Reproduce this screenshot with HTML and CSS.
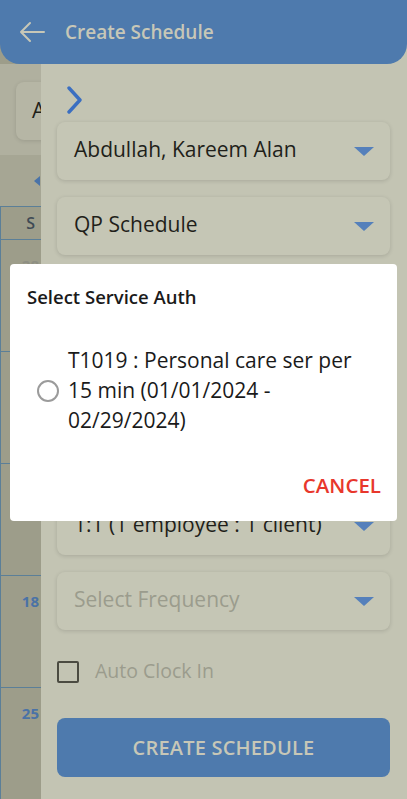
FILE: index.html
```html
<!DOCTYPE html>
<html>
<head>
<meta charset="utf-8">
<link rel="stylesheet" href="styles.css">
</head>
<body>
<div class="screen">
  <header class="appbar">
    <svg class="back" width="26" height="22" viewBox="0 0 26 22"><path d="M25 11H2M11 2L2 11l9 9" fill="none" stroke="#c7c7b7" stroke-width="2" stroke-linecap="round" stroke-linejoin="round"/></svg>
    <span class="title">Create Schedule</span>
  </header>
  <div class="body">
    <div class="behind">
      <div class="calendar">
        <div class="cal-top"><div class="cal-card"><span>A</span></div></div>
        <div class="cal-nav"><span class="nav-arrow"></span></div>
        <div class="cal-grid">
          <div class="cal-head"><span>S</span></div>
          <div class="cal-row"><span class="prev">28</span></div>
          <div class="cal-row"><span>4</span></div>
          <div class="cal-row"><span>11</span></div>
          <div class="cal-row"><span>18</span></div>
          <div class="cal-row"><span>25</span></div>
        </div>
      </div>
    </div>
    <div class="drawer">
      <svg class="chev" width="16" height="28" viewBox="0 0 16 28"><path d="M2 2l11 12L2 26" fill="none" stroke="#3b6fc1" stroke-width="3.4" stroke-linecap="round" stroke-linejoin="round"/></svg>
      <div class="fields">
        <div class="select"><span>Abdullah, Kareem Alan</span><i class="tri"></i></div>
        <div class="select"><span>QP Schedule</span><i class="tri"></i></div>
        <div class="select"><span></span><i class="tri"></i></div>
        <div class="select"><span></span><i class="tri"></i></div>
        <div class="select"><span></span><i class="tri"></i></div>
        <div class="select"><span>1:1 (1 employee : 1 client)</span><i class="tri"></i></div>
        <div class="select placeholder"><span>Select Frequency</span><i class="tri"></i></div>
      </div>
      <label class="check"><span class="box"></span><span>Auto Clock In</span></label>
      <button class="create">CREATE SCHEDULE</button>
    </div>
  </div>
  <div class="dialog">
    <div class="dlg-title">Select Service Auth</div>
    <div class="option">
      <span class="radio"></span>
      <span class="opt-text">T1019 : Personal care ser per 15 min (01/01/2024 - 02/29/2024)</span>
    </div>
    <div class="actions"><span class="cancel">CANCEL</span></div>
  </div>
</div>
</body>
</html>
```
FILE: styles.css
```css
* { box-sizing: border-box; }
html, body { margin: 0; padding: 0; }
body {
  width: 407px;
  height: 799px;
  overflow: hidden;
  font-family: "Open Sans", Lato, sans-serif;
  background: #c3c4b3;
}
.screen {
  position: relative;
  width: 407px;
  height: 799px;
  overflow: hidden;
}
.appbar {
  position: relative;
  z-index: 2;
  height: 64px;
  background: #4e7aad;
  border-radius: 0 0 20px 20px;
  display: flex;
  align-items: center;
  padding-left: 19px;
}
.back { margin-right: 20px; }
.title {
  color: #c7c7b7;
  font-size: 19px;
  font-weight: 600;
}
.body {
  display: flex;
  margin-top: -20px;
  height: 755px;
}
.behind {
  width: 41px;
  flex: none;
  overflow: hidden;
  background: #9d9d8a;
}
.calendar { width: 407px; padding-top: 20px; }
.cal-top {
  height: 91px;
  background: #b0b09f;
  padding: 18px 0 0 16px;
}
.cal-card {
  width: 300px;
  height: 58px;
  border-radius: 8px;
  background: #b6b6a5;
  box-shadow: 0 1px 4px rgba(0,0,0,0.12);
  display: flex;
  align-items: center;
  padding: 0 0 3px 16px;
  font-size: 21px;
  color: #1f1f1a;
}
.cal-nav {
  height: 51px;
  background: #a6a694;
  display: flex;
  align-items: center;
  padding-left: 34px;
}
.nav-arrow {
  width: 0; height: 0;
  border-top: 5px solid transparent;
  border-bottom: 5px solid transparent;
  border-right: 6px solid #4a73a8;
}
.cal-grid {
  border-top: 1px solid #5b7f98;
  border-left: 1px solid #5b7f98;
}
.cal-head {
  height: 32px;
  display: flex;
  align-items: center;
  justify-content: flex-end;
  width: 41px;
  padding-right: 7px;
  font-size: 16px;
  color: #3f4a55;
  font-weight: 600;
}
.cal-row {
  height: 112px;
  border-top: 1px solid #5b7f98;
  width: 407px;
  padding: 15px 0 0 0;
}
.cal-row span {
  display: block;
  width: 38px;
  text-align: right;
  font-size: 15px;
  font-weight: 700;
  color: #4a72a6;
}
.cal-row span.prev { color: #8e8f83; }
.drawer {
  flex: 1;
  background: #c3c4b3;
  padding: 42px 17px 0 16px;
  display: flex;
  flex-direction: column;
}
.chev { margin-left: 10px; display: block; }
.fields {
  margin-top: 8px;
  display: flex;
  flex-direction: column;
  gap: 17px;
}
.select {
  height: 58px;
  border-radius: 8px;
  background: #c5c6b5;
  box-shadow: 0 1px 4px rgba(0,0,0,0.14);
  display: flex;
  align-items: center;
  justify-content: space-between;
  padding: 0 16px 0 17px;
  font-size: 21px;
  color: #1f1f1a;
}
.select span { padding-bottom: 4px; }
.select.placeholder { color: #9b9c8d; }
.tri {
  width: 0; height: 0;
  border-left: 10.5px solid transparent;
  border-right: 10.5px solid transparent;
  border-top: 9px solid #5580bb;
}
.check {
  display: flex;
  align-items: center;
  margin-top: 27px;
  font-size: 19.5px;
  color: #9b9c8d;
}
.check span:last-child { padding-bottom: 3px; }
.box {
  width: 22px;
  height: 22px;
  border: 2px solid #4b4b41;
  border-radius: 2px;
  margin-right: 16px;
}
.create {
  margin-top: 31px;
  height: 59px;
  border: none;
  border-radius: 8px;
  background: #4e7aad;
  color: #c7c7b7;
  font-family: inherit;
  font-size: 20px;
  font-weight: 600;
  letter-spacing: 0.2px;
  padding-bottom: 2px;
}
.dialog {
  position: absolute;
  z-index: 3;
  left: 10px;
  top: 264px;
  width: 387px;
  height: 257px;
  background: #ffffff;
  border-radius: 4px;
  padding: 20px 16px 0 17px;
  display: flex;
  flex-direction: column;
}
.dlg-title {
  font-size: 18.5px;
  font-weight: 600;
  color: #1a1a1a;
}
.option {
  display: flex;
  align-items: center;
  margin-top: 36px;
}
.radio {
  flex: none;
  width: 22px;
  height: 22px;
  border: 2px solid #9b9b9b;
  border-radius: 50%;
  margin-left: 10px;
  margin-right: 9px;
  margin-top: 2px;
}
.opt-text {
  font-size: 21px;
  line-height: 30px;
  color: #1a1a1a;
  width: 300px;
}
.actions {
  margin-top: auto;
  margin-bottom: 22px;
  display: flex;
  justify-content: flex-end;
}
.cancel {
  color: #e8372c;
  font-size: 20.5px;
  font-weight: 600;
}
```
